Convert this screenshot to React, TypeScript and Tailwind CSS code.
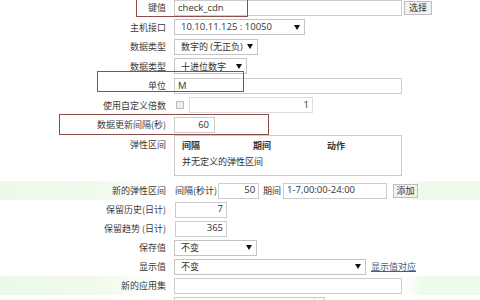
const cjk = "font-['Noto_Sans_CJK_SC',sans-serif]";
const mix = "font-['Open_Sans','Noto_Sans_CJK_SC',sans-serif]";

function Arrow() {
  return (
    <svg width="6" height="5" viewBox="0 0 6 5" className="shrink-0">
      <polygon points="0,0 6,0 3,5" fill="#111" />
    </svg>
  );
}

function Row({
  label,
  children,
  h = "h-[19.5px]",
  green = false,
}: {
  label: string;
  children?: React.ReactNode;
  h?: string;
  green?: boolean;
}) {
  return (
    <div
      className={`flex items-center ${h} ${
        green
          ? "bg-[linear-gradient(90deg,#ecf9e8_0%,#f0faec_20%,#ffffff_34%,#ffffff_84%,#eefaea_88%,#eefaea_100%)]"
          : ""
      }`}
    >
      <div className={`w-[166px] shrink-0 text-right text-[9px] leading-none text-[#3c3c3c] ${cjk}`}>
        {label}
      </div>
      <div className="ml-[8px] flex items-center">{children}</div>
    </div>
  );
}

function Input({
  w,
  value,
  right = false,
  className = "",
}: {
  w: string;
  value?: string;
  right?: boolean;
  className?: string;
}) {
  return (
    <div
      className={`flex h-[16px] items-center border border-[#cccccc] bg-white px-[3px] text-[9.5px] text-[#333] ${mix} ${w} ${
        right ? "justify-end" : ""
      } ${className}`}
    >
      {value}
    </div>
  );
}

function Select({ w, value, size = "text-[9px]" }: { w: string; value: string; size?: string }) {
  return (
    <div
      className={`flex h-[16px] items-center justify-between border border-[#c4c4c4] bg-white pl-[6px] pr-[4px] text-[#333] ${size} ${mix} ${w}`}
    >
      <span>{value}</span>
      <Arrow />
    </div>
  );
}

function Btn({ label, w }: { label: string; w: string }) {
  return (
    <div
      className={`flex h-[14px] items-center justify-center border border-[#bdbdbd] bg-[#f2f2f2] text-[9px] text-[#333] ${cjk} ${w}`}
    >
      {label}
    </div>
  );
}

export default function App() {
  return (
    <div className="relative h-[300px] w-[480px] overflow-hidden bg-white">
      <div className="-mt-[2px]">
        <Row label="键值">
          <Input w="w-[228px]" value="check_cdn" className="border-[#a9bccd]" />
          <div className="ml-[2px]">
            <Btn label="选择" w="w-[28px]" />
          </div>
        </Row>
        <Row label="主机接口">
          <Select w="w-[131px]" value="10.10.11.125 : 10050" size="text-[9.5px]" />
        </Row>
        <Row label="数据类型">
          <Select w="w-[84px]" value="数字的 (无正负)" />
        </Row>
        <Row label="数据类型">
          <Select w="w-[73px]" value="十进位数字" />
        </Row>
        <Row label="单位">
          <Input w="w-[228px]" value="M" />
        </Row>
        <Row label="使用自定义倍数">
          <div className="ml-[2px] h-[8px] w-[8px] border border-[#bdbdbd] bg-[#eeeeee]" />
          <Input
            w="w-[124px]"
            value="1"
            right
            className="ml-[5px] border-[#dddddd] text-[#9a9a9a]"
          />
        </Row>
        <Row label="数据更新间隔(秒)">
          <Input w="w-[41px]" value="60" right className="pr-[5px]" />
        </Row>
        <div className="flex h-[46.5px] items-start">
          <div
            className={`mt-[0.5px] flex h-[19.5px] w-[166px] shrink-0 items-center justify-end text-[9px] leading-none text-[#3c3c3c] ${cjk}`}
          >
            弹性区间
          </div>
          <div
            className={`ml-[8px] mt-[0.5px] h-[41px] w-[228px] border border-[#cccccc] bg-white text-[9px] text-[#333] ${cjk}`}
          >
            <div className="flex h-[19px] items-center pl-[7px] font-bold">
              <span className="w-[71px]">间隔</span>
              <span className="w-[74px]">期间</span>
              <span>动作</span>
            </div>
            <div className="flex h-[14px] items-center pl-[7px]">并无定义的弹性区间</div>
          </div>
        </div>
        <Row label="新的弹性区间" h="h-[19px]" green>
          <span className={`ml-[1px] text-[9px] text-[#333] ${cjk}`}>间隔(秒计)</span>
          <Input w="w-[41px]" value="50" right className="ml-[1px] h-[14px]" />
          <span className={`ml-[4px] text-[9px] text-[#333] ${cjk}`}>期间</span>
          <Input w="w-[104px]" value="1-7,00:00-24:00" className="ml-[2px] h-[14px]" />
          <div className="ml-[6px]">
            <Btn label="添加" w="w-[25px]" />
          </div>
        </Row>
        <Row label="保留历史(日计)" h="h-[19px]">
          <Input w="w-[52px]" value="7" right className="ml-[1px] h-[14px]" />
        </Row>
        <Row label="保留趋势 (日计)" h="h-[19px]">
          <Input w="w-[52px]" value="365" right className="ml-[1px] h-[15px]" />
        </Row>
        <Row label="保存值" h="h-[19px]">
          <Select w="w-[83px]" value="不变" />
        </Row>
        <Row label="显示值" h="h-[19px]">
          <Select w="w-[192px]" value="不变" />
          <span className={`ml-[5px] text-[9px] text-[#4b5d7e] underline ${cjk}`}>显示值对应</span>
        </Row>
        <Row label="新的应用集" h="h-[19px]" green>
          <Input w="w-[228px]" />
        </Row>
        <div className="flex h-[20px] items-start">
          <div className="w-[166px] shrink-0" />
          <div className="ml-[8px] mt-[2px] flex h-[20px] w-[151px] justify-end border border-[#c9c9c9] bg-white">
            <div className="w-[10px] border-l border-[#dddddd]" />
          </div>
        </div>
      </div>

      <div className="pointer-events-none absolute left-[136px] top-[-3px] h-[20px] w-[112px] border-[1.5px] border-[#8e4c48]" />
      <div className="pointer-events-none absolute left-[97px] top-[71px] h-[21px] w-[147px] border-[1.5px] border-[#8e4c48]" />
      <div className="pointer-events-none absolute left-[59px] top-[114px] h-[21px] w-[210px] border-[1.5px] border-[#8e4c48]" />
    </div>
  );
}
